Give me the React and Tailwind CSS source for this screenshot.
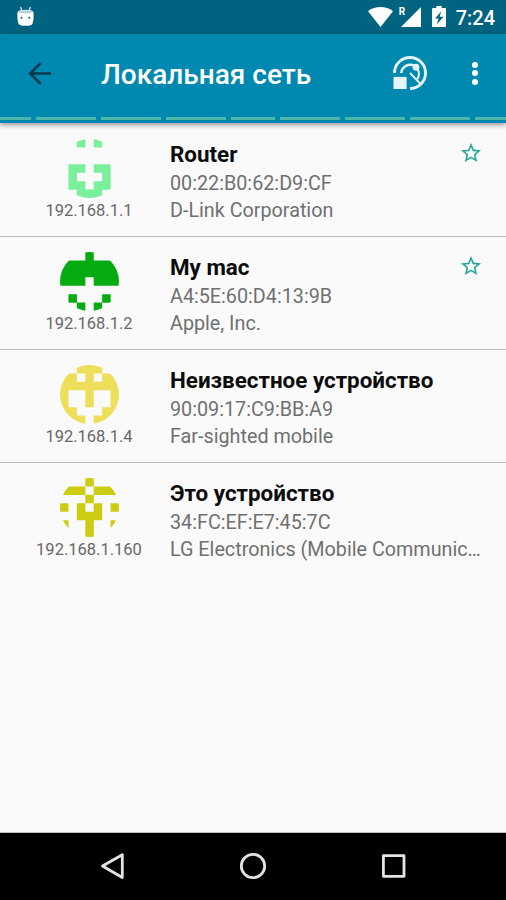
import React from 'react';

const devices = [
  {
    name: 'Router',
    mac: '00:22:B0:62:D9:CF',
    vendor: 'D-Link Corporation',
    ip: '192.168.1.1',
    color: '#7af09c',
    starred: true,
    cells: ['0010100', '0000000', '0000000', '0110110', '0100010', '0110110', '0011100']
  },
  {
    name: 'My mac',
    mac: 'A4:5E:60:D4:13:9B',
    vendor: 'Apple, Inc.',
    ip: '192.168.1.2',
    color: '#06ab12',
    starred: true,
    cells: ['0001000', '1111111', '1111111', '1110111', '0000000', '0100010', '0010100']
  },
  {
    name: 'Неизвестное устройство',
    mac: '90:09:17:C9:BB:A9',
    vendor: 'Far-sighted mobile',
    ip: '192.168.1.4',
    color: '#eedf5a',
    starred: false,
    cells: ['0011100', '1101011', '1111111', '1001001', '1001001', '1100011', '0110110']
  },
  {
    name: 'Это устройство',
    mac: '34:FC:EF:E7:45:7C',
    vendor: 'LG Electronics (Mobile Communic…',
    ip: '192.168.1.160',
    color: '#cccc10',
    starred: false,
    cells: ['0001000', '1110111', '0001000', '1010101', '0011100', '1001001', '0001000']
  }
];

// 7x7 identicon cut to a circle
const Identicon = ({ id, cells, color }) => (
  <svg className="h-[59px] w-[59px]" viewBox="0 0 7 7" fill={color}>
    <clipPath id={id}>
      <circle cx="3.5" cy="3.5" r="3.5" />
    </clipPath>
    <path
      clipPath={`url(#${id})`}
      d={cells
        .map((row, y) => [...row].map((c, x) => (c === '1' ? `M${x} ${y}h1.01v1.01h-1.01z` : '')).join(''))
        .join('')}
    />
  </svg>
);

const StatusBar = () => (
  <div className="flex h-[34px] shrink-0 items-center bg-[#00637f] pr-[11px] pl-[17px] text-white">
    <svg className="mb-[3px] h-[20px] w-[17px]" viewBox="0 0 17 20" fill="white">
      <path d="M3.6 1l1.4 4M13.4 1L12 5" stroke="white" strokeWidth="1.1" />
      <path d="M.4 7Q.6 3.8 8.5 3.8T16.6 7Q17 13 15.6 17.5Q15 19.8 8.5 19.8T1.4 17.5Q0 13 .4 7z" />
      <ellipse cx="8.5" cy="5.9" rx="6.8" ry="1.6" fill="#b4d2d9" />
      <circle cx="4.5" cy="11.7" r="1" fill="#00637f" />
      <circle cx="12.3" cy="11.7" r="1" fill="#00637f" />
    </svg>
    <svg className="mb-px ml-auto h-[20px] w-[25px]" viewBox="0 0 25 20" fill="white">
      <path d="M12.5 20L0 4.2Q5.5 0 12.5 0T25 4.2z" />
    </svg>
    <span className="mb-[10px] ml-[6px] w-[6px] text-[10px] leading-none font-bold">R</span>
    <svg className="mb-px -ml-[4px] h-[20px] w-[20px]" viewBox="0 0 20 20" fill="white">
      <path d="M20 0v20H0z" />
    </svg>
    <svg className="mb-px ml-[11px] h-[21px] w-[14px]" viewBox="0 0 14 21">
      <path d="M4.3 0h5.4v2H13q1 0 1 1v17q0 1-1 1H1q-1 0-1-1V3q0-1 1-1h3.3z" fill="white" />
      <path d="M9.3 5.3L3 12.4h3.6l-1.9 6.1L11.5 10.8H7.6z" fill="#00637f" />
    </svg>
    <span className="ml-[10px] pt-px text-[20px] leading-none font-medium">7:24</span>
  </div>
);

const AppBar = () => (
  <header className="z-10 flex h-[89px] shrink-0 flex-col bg-[#0089b0] shadow-[0_2px_5px_rgba(0,0,0,0.4)]">
    <div className="flex h-[78px] items-center pl-[28px]">
      <svg className="h-[23px] w-[23px]" viewBox="0 0 23 23" fill="none" stroke="#07394b" strokeWidth="2.5">
        <path d="M12.6 1.2L2.2 11.5l10.4 10.3M2 11.5h21" />
      </svg>
      <h1 className="ml-[50px] pt-[3px] text-[28px] leading-none font-medium text-white">Локальная сеть</h1>
      <svg className="ml-auto h-[34px] w-[34px]" viewBox="0 0 35 35" fill="none" stroke="#e6f4f8" strokeWidth="3">
        <path d="M1.5 17.5A16 16 0 1 1 17.5 33.5" />
        <path d="M8.5 17.5A9.3 9.3 0 0 1 22 10" strokeWidth="2.6" />
        <path d="M25 13A9.3 9.3 0 0 1 24 25" strokeWidth="2.2" />
        <path d="M17.5 17.5L28 28.5" strokeWidth="2" />
        <circle cx="23.7" cy="11.6" r="3.5" fill="#e6f4f8" stroke="none" />
        <path d="M.5 21.5H14V34H.5z" fill="#e6f4f8" stroke="none" />
      </svg>
      <div className="mr-[28px] ml-[45px] flex flex-col gap-[2.5px]">
        <span className="h-[6px] w-[6px] rounded-full bg-white"></span>
        <span className="h-[6px] w-[6px] rounded-full bg-white"></span>
        <span className="h-[6px] w-[6px] rounded-full bg-white"></span>
      </div>
    </div>
    {/* Scan progress */}
    <div className="mt-[5px] flex h-[3px] gap-[5px] *:bg-[#4db6ac]">
      <div className="w-[31px]"></div>
      <div className="w-[60px]"></div>
      <div className="w-[60px]"></div>
      <div className="w-[60px]"></div>
      <div className="w-[44px]"></div>
      <div className="w-[60px]"></div>
      <div className="w-[60px]"></div>
      <div className="w-[60px]"></div>
      <div className="w-[31px]"></div>
    </div>
  </header>
);

const DeviceRow = ({ device, index }) => (
  <li className="flex h-[113px] border-b border-[#bdbdbd]">
    <div className="flex w-[170px] shrink-0 flex-col items-center pt-[15px] pl-[8px]">
      <Identicon id={`device-${index}`} cells={device.cells} color={device.color} />
      <span className="mt-[3px] text-[16.5px] leading-[20px] text-[#686868]">{device.ip}</span>
    </div>
    <div className="flex-1 pt-[16px] pr-[24px] text-[19.75px] leading-[27px] whitespace-nowrap text-[#707070]">
      <div className="flex h-[30px] justify-between">
        <h2 className="text-[22.4px] leading-[28px] font-bold text-[#0c0c0c]">{device.name}</h2>
        {device.starred && (
          <svg className="mt-[2px] h-[22px] w-[22px]" viewBox="1 1 22 22" fill="#26a69a">
            <path d="M22 9.24l-7.19-.62L12 2 9.19 8.63 2 9.24l5.46 4.73L5.82 21 12 17.27 18.18 21l-1.63-7.03L22 9.24zM12 15.4l-3.76 2.27 1-4.28-3.32-2.88 4.38-.38L12 6.1l1.71 4.04 4.38.38-3.32 2.88 1 4.28L12 15.4z" />
          </svg>
        )}
      </div>
      <p>{device.mac}</p>
      <p>{device.vendor}</p>
    </div>
  </li>
);

const NavigationBar = () => (
  <nav className="flex h-[67px] shrink-0 items-center justify-between bg-black pr-[98px] pb-px pl-[99px]">
    <svg className="h-[28px] w-[26px]" viewBox="0 0 26 28" fill="none" stroke="#e4e4e4" strokeWidth="2.8" strokeLinejoin="round">
      <path d="M23.3 2.7v22.8L3.5 14z" />
    </svg>
    <svg className="h-[28px] w-[28px]" viewBox="0 0 28 28" fill="none" stroke="#e4e4e4" strokeWidth="2.8">
      <circle cx="14" cy="14" r="11.7" />
    </svg>
    <svg className="h-[28px] w-[28px]" viewBox="0 0 28 28" fill="none" stroke="#e4e4e4" strokeWidth="2.8" strokeLinejoin="round">
      <path d="M3.4 3.7h20.6v20.6H3.4z" />
    </svg>
  </nav>
);

const App = () => {
  return (
    <div className="flex h-[900px] w-[506px] flex-col overflow-hidden bg-[#fafafa] font-['Roboto',sans-serif]">
      <StatusBar />
      <AppBar />
      <ul className="flex-1 border-b border-[#bdbdbd] pt-[1px] [&>li:last-child]:border-transparent">
        {devices.map((device, index) => (
          <DeviceRow key={device.mac} device={device} index={index} />
        ))}
      </ul>
      <NavigationBar />
    </div>
  );
};

export default App;
